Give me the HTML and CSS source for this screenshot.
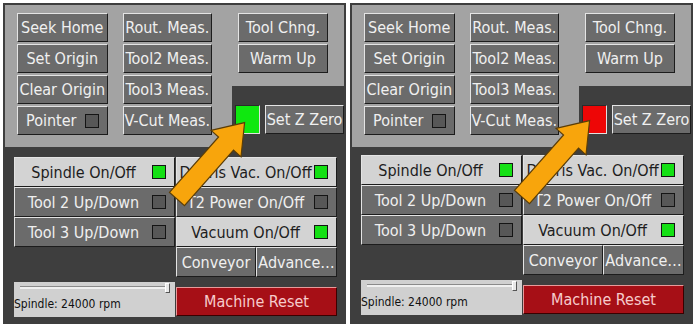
FILE: index.html
```html
<!DOCTYPE html>
<html lang="en">
<head>
    <meta charset="UTF-8">
    <meta name="viewport" content="width=device-width, initial-scale=1.0">
    <title>Machine Panel</title>
    <link rel="stylesheet" href="styles.css">
</head>
<body>
<div class="shots">

    <!-- Z sensor ok -->
    <div class="panel">
        <div class="top">
            <div class="col">
                <div class="btn">Seek Home</div>
                <div class="btn">Set Origin</div>
                <div class="btn">Clear Origin</div>
                <div class="btn"><span class="txt">Pointer</span><span class="led"></span></div>
            </div>
            <div class="col">
                <div class="btn">Rout. Meas.</div>
                <div class="btn">Tool2 Meas.</div>
                <div class="btn">Tool3 Meas.</div>
                <div class="btn">V-Cut Meas.</div>
            </div>
            <div class="side">
                <div class="col">
                    <div class="btn">Tool Chng.</div>
                    <div class="btn">Warm Up</div>
                </div>
                <div class="zrow">
                    <div class="zled on"></div>
                    <div class="btn zbtn">Set Z Zero</div>
                </div>
            </div>
        </div>
        <div class="bottom">
            <div class="stack">
                <div class="btn wide light"><span class="txt">Spindle On/Off</span><span class="led on"></span></div>
                <div class="btn wide"><span class="txt">Tool 2 Up/Down</span><span class="led"></span></div>
                <div class="btn wide"><span class="txt">Tool 3 Up/Down</span><span class="led"></span></div>
                <div class="slider">
                    <div class="track"><span class="thumb"></span></div>
                    <div class="slabel">Spindle: 24000 rpm</div>
                </div>
            </div>
            <div class="stack">
                <div class="btn wide light"><span class="txt">Debris Vac. On/Off</span><span class="led on"></span></div>
                <div class="btn wide"><span class="txt">T2 Power On/Off</span><span class="led"></span></div>
                <div class="btn wide light"><span class="txt">Vacuum On/Off</span><span class="led on"></span></div>
                <div class="pair">
                    <div class="btn">Conveyor</div>
                    <div class="btn">Advance…</div>
                </div>
                <div class="btn reset">Machine Reset</div>
            </div>
        </div>
        <svg class="arrow" width="343" height="321" viewBox="0 0 343 321">
            <g transform="translate(174 196) rotate(-48.5)">
                <polygon points="0,-10 74,-10 74,-20 102,0 74,20 74,10 0,10"/>
            </g>
        </svg>
    </div>

    <!-- Z sensor tripped -->
    <div class="panel alt">
        <div class="top">
            <div class="col">
                <div class="btn">Seek Home</div>
                <div class="btn">Set Origin</div>
                <div class="btn">Clear Origin</div>
                <div class="btn"><span class="txt">Pointer</span><span class="led"></span></div>
            </div>
            <div class="col">
                <div class="btn">Rout. Meas.</div>
                <div class="btn">Tool2 Meas.</div>
                <div class="btn">Tool3 Meas.</div>
                <div class="btn">V-Cut Meas.</div>
            </div>
            <div class="side">
                <div class="col">
                    <div class="btn">Tool Chng.</div>
                    <div class="btn">Warm Up</div>
                </div>
                <div class="zrow">
                    <div class="zled off"></div>
                    <div class="btn zbtn">Set Z Zero</div>
                </div>
            </div>
        </div>
        <div class="bottom">
            <div class="stack">
                <div class="btn wide light"><span class="txt">Spindle On/Off</span><span class="led on"></span></div>
                <div class="btn wide"><span class="txt">Tool 2 Up/Down</span><span class="led"></span></div>
                <div class="btn wide"><span class="txt">Tool 3 Up/Down</span><span class="led"></span></div>
                <div class="slider">
                    <div class="track"><span class="thumb"></span></div>
                    <div class="slabel">Spindle: 24000 rpm</div>
                </div>
            </div>
            <div class="stack">
                <div class="btn wide light"><span class="txt">Debris Vac. On/Off</span><span class="led on"></span></div>
                <div class="btn wide"><span class="txt">T2 Power On/Off</span><span class="led"></span></div>
                <div class="btn wide light"><span class="txt">Vacuum On/Off</span><span class="led on"></span></div>
                <div class="pair">
                    <div class="btn">Conveyor</div>
                    <div class="btn">Advance…</div>
                </div>
                <div class="btn reset">Machine Reset</div>
            </div>
        </div>
        <svg class="arrow" width="343" height="321" viewBox="0 0 343 321">
            <g transform="translate(172 194) rotate(-48.5)">
                <polygon points="0,-10 74,-10 74,-20 102,0 74,20 74,10 0,10"/>
            </g>
        </svg>
    </div>

</div>
</body>
</html>
```

FILE: styles.css
```css
*{
    margin: 0;
    padding: 0;
    box-sizing: border-box;
}
body{
    background: #fff;
    font-family: "DejaVu Sans Condensed", "DejaVu Sans", sans-serif;
    font-stretch: condensed;
    font-size: 16px;
}
.shots{
    display: flex;
    gap: 4px;
    padding: 3px 0 0 3px;
}
.panel{
    position: relative;
    width: 343px;
    height: 321px;
    background: #3e3e3e;
    overflow: hidden;
}

/* upper grey block */
.top{
    display: flex;
    margin: 2px 2px 0;
    height: 142px;
    padding-left: 12px;
    background: #a3a3a3;
}
.col{
    display: flex;
    flex-direction: column;
    gap: 2px;
    padding-top: 8px;
}
.top > .col:first-child{
    width: 91px;
}
.top > .col:nth-child(2){
    width: 90px;
    margin-left: 15px;
}
.side{
    display: flex;
    flex-direction: column;
    flex: 1;
    margin-left: 20px;
}
.side .col{
    height: 81px;
    padding-left: 6px;
    width: 96px;
}
.zrow{
    flex: 1;
    display: flex;
    align-items: flex-start;
    gap: 5px;
    padding: 19px 0 0 3px;
    background: #3e3e3e;
}
.zled{
    width: 25px;
    height: 29px;
    border: 1px solid;
    border-color: #2a2a2a #e0e0e0 #e0e0e0 #2a2a2a;
}
.zled.on{
    background: #0fe80f;
}
.zled.off{
    background: #ee0606;
}
.zbtn{
    width: 79px;
    height: 30px;
}

/* buttons */
.btn{
    height: 29px;
    display: flex;
    align-items: center;
    justify-content: center;
    white-space: nowrap;
    background: #6b6b6b;
    color: #f0f0f0;
    border: 1px solid;
    border-color: #e4e4e4 #1c1c1c #1c1c1c #e4e4e4;
}
.btn .txt{
    flex: 1;
    text-align: center;
}
.led{
    width: 14px;
    height: 14px;
    margin-right: 8px;
    border: 1px solid #141414;
    background: #575757;
}
.led.on{
    background: #14e014;
}
.btn.light{
    background: #d3d3d3;
    color: #1d1d1d;
}

/* lower block */
.bottom{
    display: grid;
    grid-template-columns: 161px 161px;
    column-gap: 1px;
    margin: 10px 0 0 11px;
}
.alt .bottom{
    margin-top: 8px;
}
.stack{
    display: flex;
    flex-direction: column;
}
.btn.wide{
    height: 30px;
}
.pair{
    display: grid;
    grid-template-columns: 80px 81px;
}
.pair .btn{
    height: 30px;
}
.reset{
    margin-top: 10px;
    background: #a60f16;
    color: #f6cccc;
    border-color: #e79a9a #3a0000 #3a0000 #e79a9a;
}

.slider{
    margin-top: 35px;
    height: 35px;
    background: #d0d0d0;
}
.track{
    position: relative;
    height: 3px;
    margin: 4px 7px 0 6px;
    background: #f0f0f0;
    border-top: 1px solid #8a8a8a;
}
.thumb{
    position: absolute;
    right: -2px;
    top: -4px;
    width: 5px;
    height: 10px;
    background: #e8e8e8;
    border: 1px solid;
    border-color: #fff #555 #555 #fff;
}
.slabel{
    margin-top: 8px;
    font-size: 12px;
    color: #111;
}

.arrow{
    position: absolute;
    left: 0;
    top: 0;
    pointer-events: none;
}
.arrow polygon{
    fill: #f8a50c;
    stroke: #5a3d08;
    stroke-width: 1.2;
}
```
